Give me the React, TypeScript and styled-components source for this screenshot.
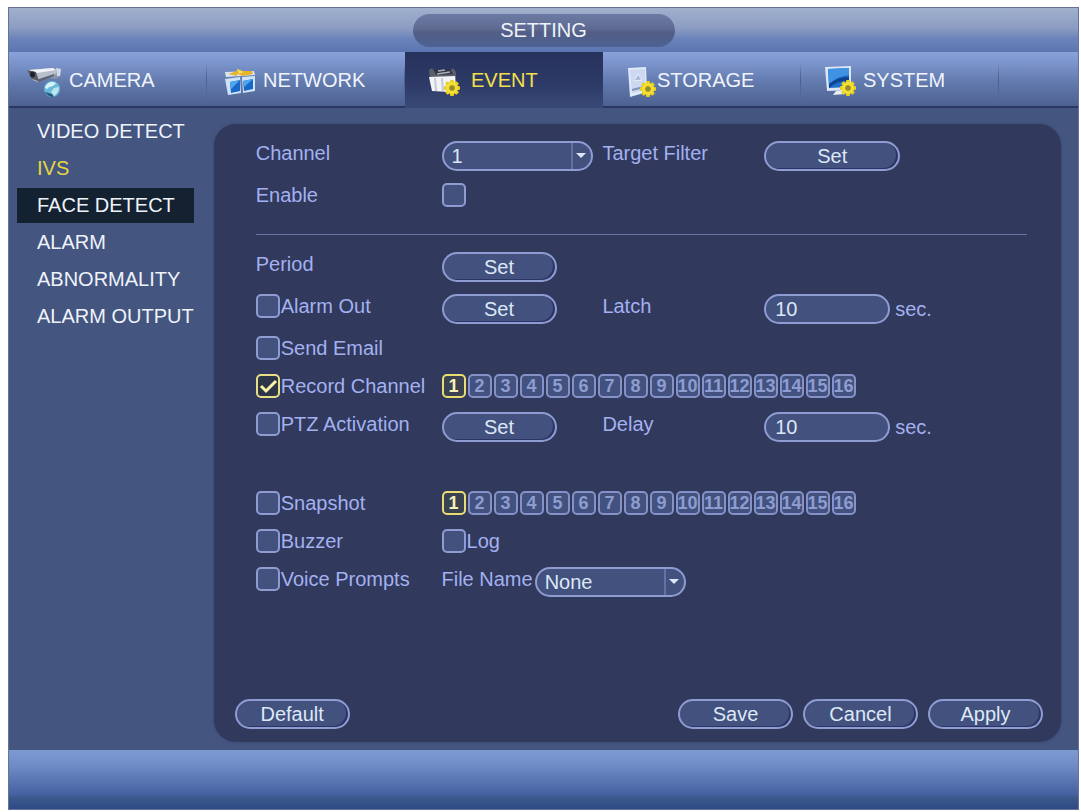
import React, { useId, useState } from "react";
import styled, { createGlobalStyle, css } from "styled-components";

const color = {
  base: "#445580",
  panel: "#31395d",
  control: "#43517f",
  line: "#8f9cd2",
  label: "#a3b1f0",
  value: "#dce8f6",
  accent: "#f3e04a",
};

const GlobalStyle = createGlobalStyle`
  * { box-sizing: border-box; }
  body { margin: 0; background: #fff; }
  body, button, input, select {
    font-family: "Liberation Sans", Arial, sans-serif;
    font-size: 20px;
    line-height: 24px;
  }
`;

const Page = styled.div`
  min-height: 100vh;
  padding: 7px 2px 2px 8px;
  display: flex;
`;

const Window = styled.div`
  flex: 1;
  min-width: 0;
  display: flex;
  flex-direction: column;
  border: 1px solid #66729a;
  background: ${color.base};
`;

const TitleBar = styled.header`
  height: 44px;
  display: flex;
  align-items: center;
  justify-content: center;
  background: linear-gradient(#a0b0cd 0%, #8c9dc2 45%, #6b83ba 70%, #5a76b0 100%);
`;

const Title = styled.h1`
  margin: 0;
  width: 262px;
  padding: 4px 0 5px;
  border-radius: 17px;
  text-align: center;
  font-size: 20px;
  font-weight: 400;
  color: #eef3fb;
  background: linear-gradient(#6c7ba4 0%, #5f6a92 45%, #535e85 55%, #4c6293 100%);
`;

const Tabs = styled.nav`
  display: grid;
  grid-template-columns: repeat(5, 198fr) 79fr;
  background: linear-gradient(#89a3da 0%, #7891c8 25%, #5f77aa 60%, #4e6291 100%);
  border-bottom: 2px solid #2a3763;
`;

const Tab = styled.button<{ $active: boolean; $inset: number }>`
  height: 56px;
  margin-bottom: -2px;
  padding: 0 0 0 ${(p) => p.$inset}px;
  display: flex;
  align-items: center;
  border: 0;
  background: linear-gradient(transparent 20%, #4a5d8e 50%, transparent 85%) right / 1px 100% no-repeat;
  color: #f0f4fb;
  cursor: pointer;
  ${(p) =>
    p.$active &&
    css`
      color: ${color.accent};
      background: linear-gradient(#27325c, #2e3b68 60%, #394a77);
    `}
`;

const Main = styled.div`
  flex: 1;
  display: flex;
`;

const Sidebar = styled.nav`
  flex: 0 0 204px;
  padding: 6px 20px 0 8px;
  display: flex;
  flex-direction: column;
  gap: 2px;
`;

const SideLink = styled.a<{ $current?: boolean; $highlight?: boolean }>`
  padding: 5px 0 6px 20px;
  white-space: nowrap;
  text-decoration: none;
  color: ${(p) => (p.$current ? "#e6d545" : "#eef3fa")};
  background: ${(p) => (p.$highlight ? "#142131" : "transparent")};
`;

const Panel = styled.form`
  flex: 1;
  min-width: 0;
  margin: 16px 17px 8px 0;
  display: flex;
  flex-direction: column;
  border-radius: 22px;
  background: ${color.panel};
  box-shadow: 0 0 3px #36426b;
`;

const Fields = styled.div`
  padding: 17px 34px 20px 42px;
`;

const Row = styled.div<{ $tall?: boolean }>`
  display: grid;
  grid-template-columns: 186fr 161fr 162fr 263fr;
  align-items: start;
  min-height: ${(p) => (p.$tall ? 42 : 38)}px;
  color: ${color.label};
  white-space: nowrap;
`;

const Wide = styled.div`
  grid-column: 2 / -1;
  display: flex;
  gap: 2px;
`;

const Divider = styled.hr`
  height: 1px;
  margin: 13px 0 17px;
  border: 0;
  background: #6a73a3;
`;

const LowerGroup = styled.div`
  margin-top: 37px;
`;

const pill = css`
  height: 30px;
  border: 2px solid ${color.line};
  border-radius: 15px;
  background: ${color.control};
  color: ${color.value};
`;

const PillButton = styled.button<{ $wide?: boolean }>`
  ${pill}
  width: ${(p) => (p.$wide ? 136 : 115)}px;
  padding: 0;
  box-shadow: inset -2px -1px 0 #2b3565;
  cursor: pointer;
`;

const NumberBox = styled.input`
  ${pill}
  width: 126px;
  padding: 0 9px;
`;

const WithUnit = styled.div`
  display: flex;
  gap: 5px;
  line-height: 30px;
`;

const SelectBox = styled.span`
  position: relative;
  display: block;
  width: 151px;
  height: 30px;
`;

const Select = styled.select`
  ${pill}
  width: 100%;
  padding: 0 26px 0 8px;
  appearance: none;
`;

const SelectArrow = styled.svg`
  position: absolute;
  top: 2px;
  right: 2px;
  pointer-events: none;
`;

const CheckWrap = styled.span`
  position: relative;
  width: 24px;
  height: 24px;
`;

const CheckInput = styled.input`
  display: block;
  width: 24px;
  height: 24px;
  margin: 0;
  appearance: none;
  border: 2px solid ${color.line};
  border-radius: 5px;
  background: ${color.control};
  &:checked {
    border-color: #e9df86;
    background: #2d3548;
  }
`;

const CheckMark = styled.svg`
  position: absolute;
  inset: 0;
  pointer-events: none;
`;

const CheckLabel = styled.label`
  display: flex;
  gap: 1px;
`;

const Chip = styled.button<{ $on: boolean }>`
  width: 24px;
  height: 24px;
  padding: 0;
  display: flex;
  align-items: center;
  justify-content: center;
  border: 2px solid ${(p) => (p.$on ? "#e9dc70" : "#8492c8")};
  border-radius: 5px;
  background: ${(p) => (p.$on ? "#3a4252" : color.control)};
  color: ${(p) => (p.$on ? "#f6f0b8" : "#8d9dd0")};
  font-size: 18px;
  font-weight: 700;
  cursor: pointer;
`;

const Actions = styled.div`
  margin-top: auto;
  padding: 0 18px 13px 21px;
  display: flex;
  gap: 10px;
  & > :first-child { margin-right: auto; }
`;

const BottomBar = styled.footer`
  height: 59px;
  background: linear-gradient(#7e9ad2 0%, #708dc8 25%, #5570ad 58%, #4660a0 76%, #3c5a8c 80%, #2e4985 100%);
`;

function Gear({ x, y }: { x: number; y: number }) {
  return (
    <g transform={`translate(${x} ${y})`}>
      {[0, 45, 90, 135].map((a) => (
        <rect key={a} x="-2" y="-8" width="4" height="16" rx="1" fill="#e8cf1e" transform={`rotate(${a})`} />
      ))}
      <circle r="6" fill="#f3df35" />
      <circle r="2.5" fill="#8f8a3a" stroke="#b39a14" />
    </g>
  );
}

function CameraIcon() {
  return (
    <svg width="42" height="36" viewBox="0 0 42 36" aria-hidden="true">
      <path d="M22 13 L27 12 L29 6 L34 7 L33 15 L28 17 L23 16Z" fill="#8b95aa" />
      <path d="M29 6 L34 7 L33 14 L30 14Z" fill="#d3d9e6" />
      <path d="M1 8 L26 6 L30 9 L28 13 L11 20 L6 18Z" fill="#b9becb" />
      <path d="M2 8 L26 6 L29 8 L10 11Z" fill="#f0f2f7" />
      <path d="M9 18 L27 12 L27 14 L12 20Z" fill="#5c6274" />
      <path d="M0 8 L9 10 L12 19 L5 17Z" fill="#5a5964" />
      <ellipse cx="5.5" cy="12.5" rx="2.5" ry="3" fill="#20222e" />
      <circle cx="25" cy="27" r="8" fill="#69b8d8" />
      <path d="M18 25 Q22 18 29 21 Q26 25 22 25 Q20 29 18 25Z" fill="#d6f3f7" />
      <path d="M27 26 L32 25 Q32 31 27 34 L24 30Z" fill="#b8e6ef" />
      <path d="M18 30 Q21 35 27 35 L25 32Z" fill="#285878" />
    </svg>
  );
}

function NetworkIcon() {
  return (
    <svg width="38" height="36" viewBox="0 0 38 36" aria-hidden="true">
      <path d="M0 10 L29 9 L30 13 L1 15Z" fill="#dce6f2" />
      <path d="M3 12 L12 9 L12 7 L18 9 L27 9 L28 12 L18 14 L12 12 L12 14Z" fill="#e8b42a" />
      <path d="M12 7 L19 10 L14 12Z" fill="#f8dc55" />
      <path d="M0 17 L15 15 L16 31 L3 33Z" fill="#cfe3f8" />
      <path d="M5 20 L15 18 L15 29 L6 31Z" fill="#1769c8" />
      <path d="M5 20 L15 18 L6 27Z" fill="#4fa6ec" />
      <path d="M17 15 L30 14 L30 29 L18 31Z" fill="#cfe3f8" />
      <path d="M18 19 L28 17 L28 27 L19 29Z" fill="#1769c8" />
      <path d="M18 19 L28 17 L19 25Z" fill="#4fa6ec" />
    </svg>
  );
}

function EventIcon() {
  return (
    <svg width="42" height="36" viewBox="0 0 42 36" aria-hidden="true">
      <path d="M0 8 L3 6 L5 9 L22 8 L24 6 L27 10 L27 17 L1 17Z" fill="#59606c" />
      <path d="M5 8 L21 7 L24 12 L7 13Z" fill="#30353f" />
      <path d="M8 12 L21 10 M9 9 L16 8" stroke="#a9afb9" strokeWidth="1.5" />
      <path d="M0 15 L26 14 L27 24 L20 30 L3 29Z" fill="#f2f3f6" />
      <path d="M6 16 L7 29 M13 16 L14 29" stroke="#c3c9d6" strokeWidth="2" />
      <Gear x={23} y={26} />
    </svg>
  );
}

function StorageIcon() {
  return (
    <svg width="30" height="36" viewBox="0 0 30 36" aria-hidden="true">
      <path d="M1 6 L19 5 L20 30 L3 35Z" fill="#e0e9f8" />
      <path d="M3 8 L18 7 L18 28 L5 31Z" fill="#cbd8f0" />
      <path d="M7 19 L11 12 L15 18Z" fill="#a9b9d8" stroke="#e9f0fb" />
      <path d="M5 28 L17 25" stroke="#8093b8" strokeWidth="2" />
      <Gear x={21} y={27} />
    </svg>
  );
}

function SystemIcon() {
  return (
    <svg width="38" height="36" viewBox="0 0 38 36" aria-hidden="true">
      <path d="M0 5 L26 4 L26 28 L2 29Z" fill="#dce6f4" />
      <path d="M3 7 L24 6 L24 25 L4 26Z" fill="#1d6fc9" />
      <path d="M3 7 L24 6 L24 13 Q12 14 4 22Z" fill="#3f93e2" />
      <path d="M4 22 Q14 14 24 15 L24 19 Q12 18 4 26Z" fill="#0d438f" />
      <path d="M11 29 L18 28 L20 32 L8 33Z" fill="#e9eef6" />
      <Gear x={23} y={26} />
    </svg>
  );
}

const tabs = [
  { name: "CAMERA", Icon: CameraIcon, inset: 18 },
  { name: "NETWORK", Icon: NetworkIcon, inset: 18 },
  { name: "EVENT", Icon: EventIcon, inset: 24 },
  { name: "STORAGE", Icon: StorageIcon, inset: 24 },
  { name: "SYSTEM", Icon: SystemIcon, inset: 24 },
];

const sections = ["VIDEO DETECT", "IVS", "FACE DETECT", "ALARM", "ABNORMALITY", "ALARM OUTPUT"];

function CheckControl({ id, label, initial = false }: { id?: string; label?: string; initial?: boolean }) {
  const [checked, setChecked] = useState(initial);
  const box = (
    <CheckWrap>
      <CheckInput id={id} type="checkbox" checked={checked} onChange={(e) => setChecked(e.target.checked)} />
      {checked && (
        <CheckMark width="24" height="24" viewBox="0 0 24 24" aria-hidden="true">
          <path d="M5 12 L10 17 L20 7" fill="none" stroke="#fbf3a8" strokeWidth="3" />
        </CheckMark>
      )}
    </CheckWrap>
  );
  return label ? (
    <CheckLabel>
      {box}
      {label}
    </CheckLabel>
  ) : (
    box
  );
}

function Dropdown({ id, options }: { id: string; options: string[] }) {
  return (
    <SelectBox>
      <Select id={id}>
        {options.map((o) => (
          <option key={o}>{o}</option>
        ))}
      </Select>
      <SelectArrow width="20" height="26" viewBox="0 0 20 26" aria-hidden="true">
        <path d="M1 0 V26" stroke="#6f7cb0" strokeWidth="1.5" />
        <path d="M5 10 H15 L10 15Z" fill="#dfe6f8" />
      </SelectArrow>
    </SelectBox>
  );
}

function Seconds({ id }: { id: string }) {
  return (
    <WithUnit>
      <NumberBox id={id} type="text" inputMode="numeric" defaultValue="10" />
      <span>sec.</span>
    </WithUnit>
  );
}

function ChannelPicker({ label }: { label: string }) {
  const [on, setOn] = useState<number[]>([1]);
  const toggle = (n: number) => setOn(on.includes(n) ? on.filter((c) => c !== n) : [...on, n]);
  return (
    <Wide role="group" aria-label={label}>
      {Array.from({ length: 16 }, (_, i) => i + 1).map((n) => (
        <Chip key={n} type="button" $on={on.includes(n)} aria-pressed={on.includes(n)} onClick={() => toggle(n)}>
          {n}
        </Chip>
      ))}
    </Wide>
  );
}

export default function App() {
  const id = useId();
  const [tab, setTab] = useState("EVENT");
  return (
    <Page>
      <GlobalStyle />
      <Window>
        <TitleBar>
          <Title>SETTING</Title>
        </TitleBar>
        <Tabs>
          {tabs.map(({ name, Icon, inset }) => (
            <Tab key={name} type="button" $active={tab === name} $inset={inset} onClick={() => setTab(name)}>
              <Icon />
              {name}
            </Tab>
          ))}
        </Tabs>
        <Main>
          <Sidebar>
            {sections.map((s) => (
              <SideLink key={s} href="#" $current={s === "IVS"} $highlight={s === "FACE DETECT"}>
                {s}
              </SideLink>
            ))}
          </Sidebar>
          <Panel onSubmit={(e) => e.preventDefault()}>
            <Fields>
              <Row $tall>
                <label htmlFor={id + "channel"}>Channel</label>
                <Dropdown id={id + "channel"} options={["1", "2", "3", "4"]} />
                <span>Target Filter</span>
                <PillButton type="button" $wide>Set</PillButton>
              </Row>
              <Row>
                <label htmlFor={id + "enable"}>Enable</label>
                <CheckControl id={id + "enable"} />
              </Row>
              <Divider />
              <Row $tall>
                <span>Period</span>
                <PillButton type="button">Set</PillButton>
              </Row>
              <Row $tall>
                <CheckControl label="Alarm Out" />
                <PillButton type="button">Set</PillButton>
                <label htmlFor={id + "latch"}>Latch</label>
                <Seconds id={id + "latch"} />
              </Row>
              <Row>
                <CheckControl label="Send Email" />
              </Row>
              <Row>
                <CheckControl label="Record Channel" initial />
                <ChannelPicker label="Record channels" />
              </Row>
              <Row $tall>
                <CheckControl label="PTZ Activation" />
                <PillButton type="button">Set</PillButton>
                <label htmlFor={id + "delay"}>Delay</label>
                <Seconds id={id + "delay"} />
              </Row>
              <LowerGroup>
                <Row>
                  <CheckControl label="Snapshot" />
                  <ChannelPicker label="Snapshot channels" />
                </Row>
                <Row>
                  <CheckControl label="Buzzer" />
                  <CheckControl label="Log" />
                </Row>
                <Row>
                  <CheckControl label="Voice Prompts" />
                  <Wide>
                    <label htmlFor={id + "file"}>File Name</label>
                    <Dropdown id={id + "file"} options={["None"]} />
                  </Wide>
                </Row>
              </LowerGroup>
            </Fields>
            <Actions>
              <PillButton type="button">Default</PillButton>
              <PillButton type="submit">Save</PillButton>
              <PillButton type="button">Cancel</PillButton>
              <PillButton type="button">Apply</PillButton>
            </Actions>
          </Panel>
        </Main>
        <BottomBar />
      </Window>
    </Page>
  );
}
